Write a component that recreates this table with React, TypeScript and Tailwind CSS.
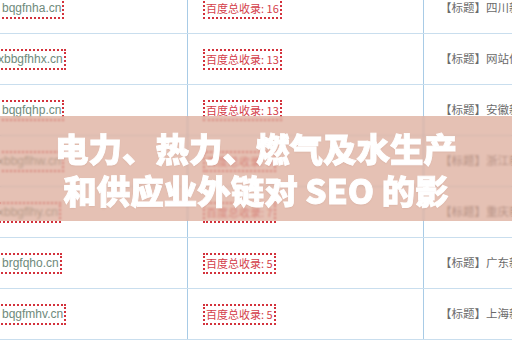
import React from "react";

type Row = {
  domain: string;
  shift: string;
  count: number;
  title: string;
};

const rows: Row[] = [
  { domain: "bqgfnha.cn", shift: "ml-0", count: 16, title: "四川新闻网" },
  { domain: "xbbgfhhx.cn", shift: "-ml-[4px]", count: 13, title: "网站优化" },
  { domain: "bqgfqhp.cn", shift: "ml-0", count: 13, title: "安徽新闻" },
  { domain: "xbbgflhw.cn", shift: "-ml-[4px]", count: 9, title: "浙江新闻" },
  { domain: "xbbgflhy.cn", shift: "-ml-[4px]", count: 7, title: "重庆新闻" },
  { domain: "brgfqho.cn", shift: "ml-0", count: 5, title: "广东新闻" },
  { domain: "bqgfmhv.cn", shift: "ml-0", count: 5, title: "上海新闻" },
  { domain: "bqgfkhs.cn", shift: "ml-0", count: 4, title: "北京新闻" },
];

function TableRow({ row }: { row: Row }) {
  return (
    <div className="flex h-[51px] border-b border-[#c9deee]">
      {/* domain column */}
      <div className="flex w-[188px] shrink-0 items-center border-r border-[#a8cbe6]">
        <div className="-ml-[10px] flex h-[21px] items-center border-2 border-dotted border-[#d3323c] pl-[10px] pr-[1px]">
          <span
            className={`${row.shift} whitespace-nowrap text-[12px] leading-none text-[#6f8a7b]`}
            style={{ fontFamily: '"Liberation Sans", Arial, sans-serif' }}
          >
            {row.domain}
          </span>
        </div>
      </div>
      {/* indexed count column */}
      <div className="flex w-[236px] shrink-0 items-center border-r border-[#a8cbe6] pl-[15px]">
        <div className="flex h-[21px] items-center border-2 border-dotted border-[#d3323c] px-[1px]">
          <span
            className="whitespace-nowrap text-[11px] leading-none text-[#d4404a]"
            style={{ fontFamily: '"Noto Sans CJK SC", "Noto Sans", sans-serif' }}
          >
            百度总收录: {row.count}
          </span>
        </div>
      </div>
      {/* title column */}
      <div className="flex min-w-0 flex-1 items-center pl-[16px]">
        <span
          className="whitespace-nowrap text-[11.5px] leading-none text-[#6a6a6a]"
          style={{ fontFamily: '"Noto Sans CJK SC", "Noto Sans", sans-serif' }}
        >
          【标题】{row.title}
        </span>
      </div>
    </div>
  );
}

export default function App() {
  return (
    <div className="relative h-[340px] w-[512px] overflow-hidden bg-white">
      <div className="-mt-[17px]">
        {rows.map((r, i) => (
          <TableRow key={i} row={r} />
        ))}
      </div>

      {/* title banner */}
      <div className="absolute left-0 right-0 top-[116px] flex h-[105px] items-center justify-center bg-[rgba(216,164,145,0.68)] backdrop-blur-[1px]">
        <div
          className="text-center text-[33.5px] font-black leading-[42px] text-white [-webkit-text-stroke:0.9px_#ffffff] [text-shadow:0_1px_2px_rgba(120,60,40,0.12)]"
          style={{ fontFamily: '"Noto Sans CJK SC", "Noto Sans", sans-serif' }}
        >
          <div>电力、热力、燃气及水生产</div>
          <div>和供应业外链对 SEO 的影</div>
        </div>
      </div>
    </div>
  );
}
